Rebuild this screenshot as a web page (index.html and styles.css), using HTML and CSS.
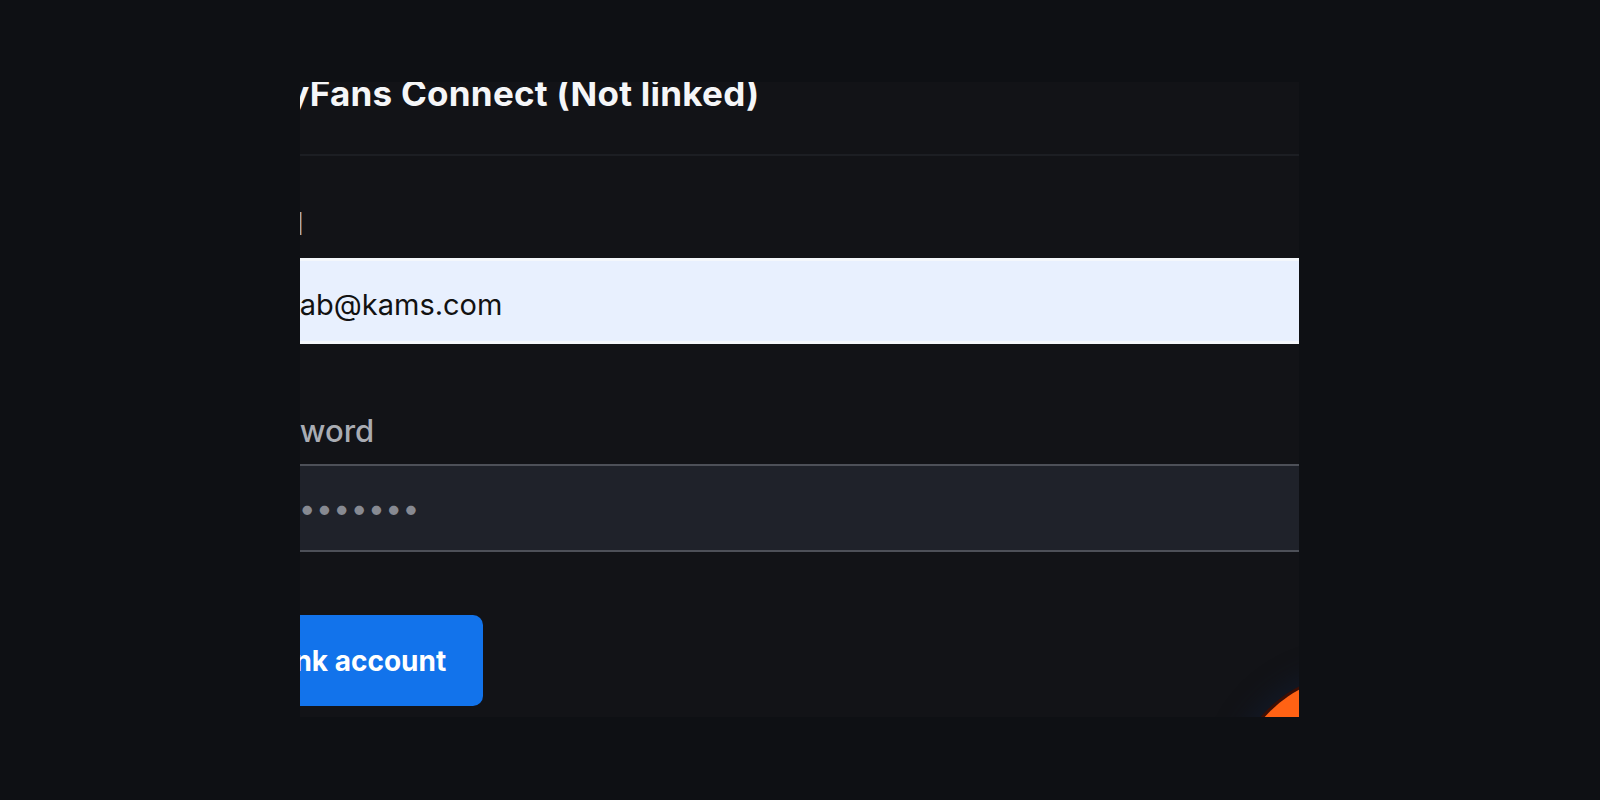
FILE: index.html
```html
<!DOCTYPE html>
<html lang="en">
<head>
<meta charset="utf-8">
<title>OnlyFans Connect</title>
<link rel="stylesheet" href="styles.css">
</head>
<body>
<div class="stage">
  <div class="frame">
    <div class="card">
      <div class="card-header">
        <h2 class="title">OnlyFans Connect (Not linked)</h2>
      </div>
      <form class="card-body">
        <div class="field">
          <label class="label label-email" for="email">Email</label>
          <input class="input input-filled" id="email" type="email" value="mslab@kams.com">
        </div>
        <div class="field field-gap">
          <label class="label label-pw" for="pw">Password</label>
          <input class="input input-dark" id="pw" type="password" value="passwordpa">
        </div>
        <div class="actions">
          <button type="button" class="btn">Link account</button>
        </div>
      </form>
    </div>
    <div class="fab"></div>
  </div>
</div>
</body>
</html>
```

FILE: styles.css
```css
* { box-sizing: border-box; }
html, body { margin: 0; padding: 0; }
body {
  background: #0e1014;
  width: 1600px;
  height: 800px;
  overflow: hidden;
  font-family: "Inter", "Liberation Sans", sans-serif;
}
.stage {
  padding: 82px 0 0 300px;
}
.frame {
  position: relative;
  width: 999px;
  height: 635px;
  overflow: hidden;
  background: #121317;
}
.card {
  margin: -10px 0 0 -64px;
  width: 1200px;
}
.card-header {
  padding-top: 1px;
  padding-bottom: 41px;
  border-bottom: 2px solid #1c1e23;
}
.title {
  margin: 0 0 0 -7px;
  font-size: 35px;
  line-height: 40px;
  font-weight: 700;
  letter-spacing: 0.25px;
  color: #f5f6f8;
}
.card-body {
  padding-top: 50px;
  display: flex;
  flex-direction: column;
}
.field {
  display: flex;
  flex-direction: column;
}
.field-gap { margin-top: 69px; }
.label {
  font-size: 31px;
  line-height: 35px;
  font-weight: 500;
  color: #a9acb3;
  margin-bottom: 17px;
}
.label-email { margin-left: -12px; }
.label-pw { margin-left: -7px; margin-bottom: 16px; }
.input {
  display: block;
  width: 1200px;
  font-family: "Inter", "Liberation Sans", sans-serif;
  outline: none;
  padding: 0 16px;
}
.input-filled {
  height: 86px;
  background: #e8f0fe;
  border: 3px solid #f4f7fb;
  color: #121212;
  font-size: 29px;
  padding-top: 6px;
  padding-left: 13px;
}
.input-dark {
  height: 88px;
  background: #1f222a;
  border: 2px solid #4d5058;
  color: #878a92;
  font-size: 30px;
  letter-spacing: 0.4px;
  padding-left: 9px;
}
.actions {
  margin-top: 63px;
  display: flex;
}
.btn {
  height: 91px;
  padding: 0 37px 0 35px;
  background: #1273eb;
  color: #ffffff;
  border: none;
  border-radius: 10px;
  font-family: "Inter", "Liberation Sans", sans-serif;
  font-size: 28px;
  font-weight: 700;
}
.fab {
  position: absolute;
  left: 935px;
  top: 594px;
  width: 240px;
  height: 240px;
  border-radius: 50%;
  background: #ff6214;
  box-shadow: 0 0 0 3px #3c0e04, 0 0 24px 10px rgba(18, 28, 48, 0.6);
}
```
